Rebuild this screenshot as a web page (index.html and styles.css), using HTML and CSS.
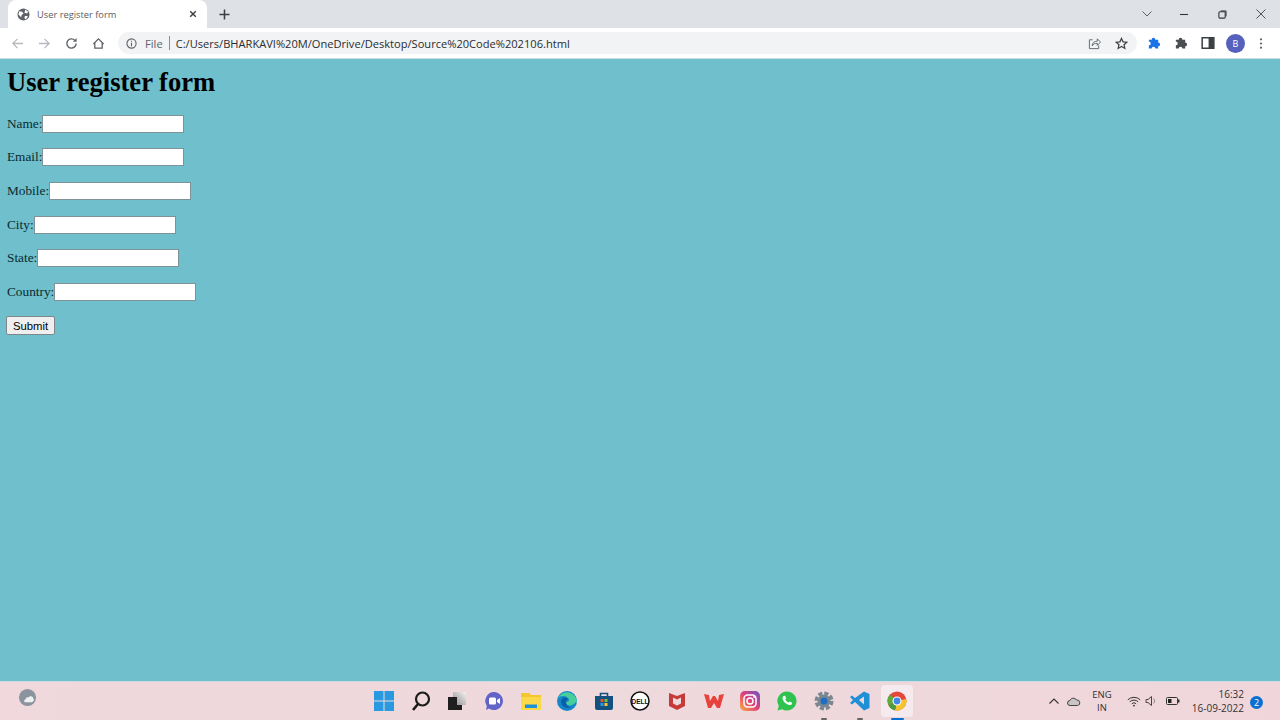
FILE: index.html
```html
<!DOCTYPE html>
<html lang="en">
  <head>
    <meta charset="utf-8" />
    <title>User register form</title>
    <link rel="stylesheet" href="styles.css">
  </head>
  <body>
    <header class="chrome">
      <div class="tabstrip">
        <div class="tab">
          <svg class="favicon" viewBox="0 0 14 14"><circle cx="7" cy="7" r="6.500" fill="#5f6368"/><path d="M2.500 3.500l3 .5 1.500 2-2 1.500-.5 2.500-3-3zM9 1.500l3 2.500-1 2-3-1zM8.500 8.500h3l-.5 2-2 2-1-2z" fill="#fff"/></svg>
          <span class="tab-title">User register form</span>
          <svg class="tab-close" viewBox="0 0 10 10"><path d="M1.500 1.500l7 7M8.500 1.500l-7 7" stroke="#3c4043" stroke-width="1.800"/></svg>
        </div>
        <svg class="new-tab" viewBox="0 0 12 12"><path d="M6 0.500v11M0.500 6h11" stroke="#3c4043" stroke-width="1.700"/></svg>
        <div class="window-controls">
          <svg class="win-icon chevron" viewBox="0 0 10 6"><path d="M0.500 0.500l4.500 4.500 4.500-4.500" fill="none" stroke="#5f6368" stroke-width="1"/></svg>
          <svg class="win-icon minimize" viewBox="0 0 10 10"><path d="M0 5h9" stroke="#333" stroke-width="1.200"/></svg>
          <svg class="win-icon restore" viewBox="0 0 10 10"><rect x="1" y="2" width="7" height="7" rx="1" fill="none" stroke="#333" stroke-width="1.200"/><path d="M3 1h6v6" fill="none" stroke="#333"/></svg>
          <svg class="win-icon close" viewBox="0 0 11 11"><path d="M0.500 0.500l10 10M10.500 0.500l-10 10" stroke="#444"/></svg>
        </div>
      </div>
      <div class="toolbar">
        <svg class="nav-icon" viewBox="0 0 14 14"><path d="M13 7H2M7 2L2 7l5 5" fill="none" stroke="#b6b9be" stroke-width="1.400"/></svg>
        <svg class="nav-icon" viewBox="0 0 14 14"><path d="M1 7h11M7 2l5 5-5 5" fill="none" stroke="#b6b9be" stroke-width="1.400"/></svg>
        <svg class="nav-icon" viewBox="0 0 14 14"><path d="M12 7a5 5 0 1 1-1.500-3.600" fill="none" stroke="#5f6368" stroke-width="1.500"/><path d="M12.500 1v4h-4z" fill="#5f6368"/></svg>
        <svg class="nav-icon" viewBox="0 0 14 14"><path d="M1.500 7.500L7 2l5.500 5.500M3 6.500V12h8V6.500" fill="none" stroke="#5f6368" stroke-width="1.400"/></svg>
        <div class="omnibox">
          <svg class="info-icon" viewBox="0 0 12 12"><circle cx="6" cy="6" r="5" fill="none" stroke="#5f6368" stroke-width="1.200"/><path d="M6 5.200V9M6 3v1.200" stroke="#5f6368" stroke-width="1.200"/></svg>
          <span class="scheme">File</span>
          <span class="divider"></span>
          <span class="url">C:/Users/BHARKAVI%20M/OneDrive/Desktop/Source%20Code%202106.html</span>
          <svg class="omni-icon share" viewBox="0 0 14 14"><path d="M5 3H1.500v9.500h10V9" fill="none" stroke="#5f6368"/><path d="M4.500 9.500c0-3.500 2.500-5 5.500-5V2l3.500 3.500L10 9V6.800c-2.500 0-4.500.7-5.500 2.700z" fill="none" stroke="#5f6368"/></svg>
          <svg class="omni-icon star" viewBox="0 0 14 14"><path d="M7 1.500l1.700 3.700 4 .4-3 2.700.9 4L7 10.300l-3.600 2 .9-4-3-2.700 4-.4z" fill="none" stroke="#3c4043" stroke-width="1.300"/></svg>
        </div>
        <svg class="ext-icon ext-blue" viewBox="0 0 15 15"><path d="M2 4h3a2 2 0 0 1 4 0h3v3a2 2 0 0 1 0 4v2.500H9a2 2 0 0 0-4 0H2V10a2 2 0 0 0 0-4z" fill="#1a73e8"/></svg>
        <svg class="ext-icon" viewBox="0 0 15 15"><path d="M2 4h3a2 2 0 0 1 4 0h3v3a2 2 0 0 1 0 4v2.500H9a2 2 0 0 0-4 0H2V10a2 2 0 0 0 0-4z" fill="#4a4d52"/></svg>
        <svg class="ext-icon" viewBox="0 0 12 12"><rect x="1" y="1.500" width="10" height="9" fill="none" stroke="#3c4043" stroke-width="1.300"/><rect x="6.500" y="1.500" width="4.500" height="9" fill="#3c4043"/></svg>
        <span class="avatar">B</span>
        <svg class="menu-dots" viewBox="0 0 4 14"><circle cx="2" cy="2.500" r="1.200" fill="#5f6368"/><circle cx="2" cy="7" r="1.200" fill="#5f6368"/><circle cx="2" cy="11.500" r="1.200" fill="#5f6368"/></svg>
      </div>
    </header>

    <main class="page">
      <h1>User register form</h1>
      <form>
        <p class="field"><label>Name:</label><input type="text" name="name" /></p>
        <p class="field"><label>Email:</label><input type="text" name="email" /></p>
        <p class="field"><label>Mobile:</label><input type="text" name="mobile" /></p>
        <p class="field"><label>City:</label><input type="text" name="city" /></p>
        <p class="field"><label>State:</label><input type="text" name="state" /></p>
        <p class="field"><label>Country:</label><input type="text" name="country" /></p>
        <p class="field"><button type="button" class="btn">Submit</button></p>
      </form>
    </main>

    <footer class="taskbar">
      <svg class="weather" viewBox="0 0 20 20"><circle cx="10" cy="10" r="9" fill="#8b949c"/><path d="M8 15c-2 0-2-3 0-3 0-2 2-3 3-2 1-2 5-2 5 1 2 1 0 4-2 4z" fill="#eef0f2"/></svg>
      <div class="task-icons">
        <span class="task-item"><svg viewBox="0 0 20 20"><path d="M0 0h9.500v9.500H0zM10.500 0H20v9.500h-9.500zM0 10.500h9.500V20H0zM10.500 10.500H20V20h-9.500z" fill="#2a9ae0"/></svg></span>
        <span class="task-item"><svg viewBox="0 0 20 20"><circle cx="11.500" cy="8" r="6.500" fill="none" stroke="#1b1b1b" stroke-width="2.200"/><path d="M7 13l-5 6" stroke="#1b1b1b" stroke-width="2.600"/></svg></span>
        <span class="task-item"><svg viewBox="0 0 20 20"><defs><linearGradient id="taskview" x1="0" y1="1" x2="1" y2="0"><stop offset="0" stop-color="#8d8a8c"/><stop offset="1" stop-color="#f5f2f4"/></linearGradient></defs><rect x="6" y="1" width="13" height="13" fill="url(#taskview)"/><rect x="1" y="6" width="9" height="13" fill="#1f1f1f"/><rect x="10" y="14" width="5" height="5" fill="#1f1f1f"/></svg></span>
        <span class="task-item"><svg viewBox="0 0 20 20"><path d="M10 1a9 9 0 1 1-5 16.500L2 19l.8-4A9 9 0 0 1 10 1z" fill="#6264c8"/><rect x="5" y="6.500" width="7" height="7" rx="1.500" fill="#fff"/><path d="M13 9l3-2v6l-3-2z" fill="#fff"/></svg></span>
        <span class="task-item"><svg viewBox="0 0 20 20"><path d="M0 2h8l2 2h10v15H0z" fill="#f7c52e"/><rect x="0" y="6" width="20" height="13" fill="#fbd84a"/><rect x="4" y="13.500" width="12" height="3.500" fill="#1f8fd6"/></svg></span>
        <span class="task-item"><svg viewBox="0 0 20 20"><circle cx="10" cy="10" r="10" fill="#1486c9"/><path d="M20 11a10 10 0 0 0-19-4c3-3 10-3 11 2 0 2-3 2-3 2 0 4 6 5 10 0z" fill="#47cf9b"/><path d="M9 11c0 3 2 5 5 5-3 2-9 1-10-5 0-2 1-3 2-4 2-1 5 0 6 2-1-1-3 0-3 2z" fill="#0b5fa8"/></svg></span>
        <span class="task-item"><svg viewBox="0 0 20 20"><path d="M1 5h18v12a2 2 0 0 1-2 2H3a2 2 0 0 1-2-2z" fill="#14517f"/><path d="M6.500 5V2.500h7V5" fill="none" stroke="#14517f" stroke-width="1.600"/><path d="M6.500 8h3v3h-3z" fill="#e5532d"/><path d="M10.500 8h3v3h-3z" fill="#7fba3a"/><path d="M6.500 12h3v3h-3z" fill="#2a9ae0"/><path d="M10.500 12h3v3h-3z" fill="#f7c52e"/></svg></span>
        <span class="task-item"><svg viewBox="0 0 20 20"><circle cx="10" cy="10" r="9" fill="#fff" stroke="#111" stroke-width="1.500"/><text x="10" y="12.500" class="dell-text">DELL</text></svg></span>
        <span class="task-item"><svg viewBox="0 0 20 20"><path d="M2 2l8 3 8-3v13l-8 4-8-4zM6 6.500v6l4 2 4-2v-6l-4 2z" fill="#c63a3a" fill-rule="evenodd"/></svg></span>
        <span class="task-item"><svg viewBox="0 0 20 20"><path d="M0 3l5 1 1 6 3-5h2l3 5 1-6 5-1-4 14h-3l-3-5-3 5H4z" fill="#e8423c"/></svg></span>
        <span class="task-item"><svg viewBox="0 0 20 20"><defs><linearGradient id="insta" x1="0" y1="1" x2="1" y2="0"><stop offset="0" stop-color="#f9b23c"/><stop offset="0.500" stop-color="#e0407a"/><stop offset="1" stop-color="#6a55c8"/></linearGradient></defs><rect width="20" height="20" rx="5" fill="url(#insta)"/><rect x="4" y="4" width="12" height="12" rx="3.500" fill="none" stroke="#fff" stroke-width="1.500"/><circle cx="10" cy="10" r="3" fill="none" stroke="#fff" stroke-width="1.500"/><circle cx="14" cy="6" r="0.900" fill="#fff"/></svg></span>
        <span class="task-item"><svg viewBox="0 0 20 20"><path d="M10 0.500a9.500 9.500 0 1 1-4.800 17.700L0.500 19.500l1.300-4.600A9.500 9.500 0 0 1 10 0.500z" fill="#2fc24f"/><path d="M6.500 5l1.500-.2 1.200 2.500-.9 1.200c.7 1.400 1.700 2.400 3.200 3l1.200-1 2.300 1.200-.2 1.500c-1 1-2.500 1.200-4.200.4-2.200-1-4-3-4.800-5-.5-1.400-.2-2.700.7-3.600z" fill="#fff"/></svg></span>
        <span class="task-item has-dot"><svg viewBox="0 0 20 20"><circle cx="10" cy="10" r="7.500" fill="none" stroke="#7b8790" stroke-width="4" stroke-dasharray="4 1.900"/><circle cx="10" cy="10" r="6.500" fill="#7b8790"/><circle cx="10" cy="10" r="3.500" fill="#1e6fc4"/></svg></span>
        <span class="task-item has-dot"><svg viewBox="0 0 20 20"><path d="M14 0.500l5.500 2.500v14L14 19.500 5 11l-3 2.500L0 12l3-3-3-3 2-1.500L5 7zM14 5.500L9 9l5 4.500z" fill="#1f8fd6" fill-rule="evenodd"/></svg></span>
        <span class="task-item active"><svg viewBox="0 0 20 20"><circle cx="10" cy="10" r="9.500" fill="#e5483a"/><path d="M10 10L1.800 14.700A9.500 9.500 0 0 1 3 3.600z" fill="#5cab3c"/><path d="M10 10l9.300-2A9.500 9.500 0 0 1 8 19.300z" fill="#f4c430"/><path d="M10 10L1.800 14.700A9.500 9.500 0 0 0 8 19.300z" fill="#4a9d40"/><circle cx="10" cy="10" r="4.500" fill="#fff"/><circle cx="10" cy="10" r="3.400" fill="#4587e8"/></svg></span>
      </div>
      <div class="tray">
        <svg class="tray-caret" viewBox="0 0 10 6"><path d="M0.500 5.500L5 1l4.500 4.500" fill="none" stroke="#333" stroke-width="1.100"/></svg>
        <svg class="tray-cloud" viewBox="0 0 14 9"><path d="M3 8.500a2.500 2.500 0 0 1 0-5C4 .5 8 .5 9.500 3a2.700 2.700 0 0 1 1 5.500z" fill="#c9c4c6" stroke="#444"/></svg>
        <span class="lang">ENG<br />IN</span>
        <svg class="tray-wifi" viewBox="0 0 14 11"><path d="M0.800 3.800a9 9 0 0 1 12.400 0M2.800 5.800a6 6 0 0 1 8.400 0M4.800 7.800a3 3 0 0 1 4.400 0" fill="none" stroke="#333"/><circle cx="7" cy="9.600" r="0.900" fill="#333"/></svg>
        <svg class="tray-sound" viewBox="0 0 12 12"><path d="M1 4.500h2L6.500 1.500v9L3 7.500H1z" fill="none" stroke="#444"/><path d="M8.500 3.500a3.500 3.500 0 0 1 0 5" fill="none" stroke="#888"/></svg>
        <svg class="tray-battery" viewBox="0 0 14 8"><rect x="0.500" y="0.500" width="11" height="7" rx="1" fill="none" stroke="#333"/><rect x="2" y="2" width="3.500" height="4" fill="#222"/><rect x="12" y="2.500" width="1.500" height="3" fill="#333"/></svg>
        <span class="clock">16:32<br />16-09-2022</span>
        <span class="badge">2</span>
      </div>
    </footer>
  </body>
</html>
```

FILE: styles.css
```css
html,
body {
  margin: 0;
  height: 100%;
}

body {
  width: 1280px;
  height: 720px;
  overflow: hidden;
  display: flex;
  flex-direction: column;
  background: #6fc0cc;
  font-family: "Liberation Serif", serif;
}

svg {
  display: block;
  flex: none;
}

/* browser frame */
.chrome {
  flex: none;
  font-family: "Open Sans", "Liberation Sans", sans-serif;
}

.tabstrip {
  height: 28px;
  display: flex;
  align-items: flex-end;
  background: #dee1e6;
}

.tab {
  width: 199px;
  height: 28px;
  margin-left: 8px;
  padding: 0 10px;
  box-sizing: border-box;
  display: flex;
  align-items: center;
  background: #fff;
  border-radius: 8px 8px 0 0;
}

.favicon {
  width: 13px;
  height: 13px;
  margin-left: -1px;
  margin-right: 7px;
}

.tab-title {
  flex: 1;
  font-size: 9.3px;
  color: #5a5d62;
}

.tab-close {
  width: 8px;
  height: 8px;
}

.new-tab {
  width: 11px;
  height: 11px;
  margin: 0 0 8px 12px;
}

.window-controls {
  margin-left: auto;
  height: 28px;
  display: flex;
  align-items: center;
}

.win-icon {
  width: 9px;
  height: 9px;
}

.chevron {
  width: 10px;
  height: 6px;
  margin-right: 28px;
}

.minimize {
  margin-right: 29px;
}

.restore {
  margin-right: 29px;
}

.close {
  width: 10px;
  height: 10px;
  margin-right: 14px;
}

.toolbar {
  height: 30px;
  padding-left: 11px;
  display: flex;
  align-items: center;
  background: #fff;
  border-bottom: 1px solid #c9dfe3;
}

.nav-icon {
  width: 13px;
  height: 13px;
  margin-right: 14px;
}

.omnibox {
  width: 1019px;
  height: 22px;
  margin-left: -1px;
  padding: 0 8px;
  box-sizing: border-box;
  display: flex;
  align-items: center;
  background: #f1f3f4;
  border-radius: 11px;
}

.info-icon {
  width: 11px;
  height: 11px;
}

.scheme {
  margin-left: 8px;
  font-size: 11.2px;
  color: #5f6368;
}

.divider {
  width: 1px;
  height: 14px;
  margin: 0 6px;
  background: #8a8d91;
}

.url {
  flex: 1;
  font-size: 11.1px;
  color: #2a2c2f;
}

.omni-icon {
  width: 13px;
  height: 13px;
}

.share {
  margin-right: 14px;
}

.star {
  margin-right: 1px;
}

.ext-icon {
  width: 14px;
  height: 14px;
  margin-left: 13px;
}

.ext-blue {
  margin-left: 10px;
}

.avatar {
  width: 19px;
  height: 19px;
  margin-left: 11px;
  display: flex;
  align-items: center;
  justify-content: center;
  border-radius: 50%;
  background: #5561bd;
  color: #fff;
  font-size: 9px;
}

.menu-dots {
  width: 4px;
  height: 13px;
  margin-left: 14px;
}

/* page content */
.page {
  flex: 1;
  padding: 0 7px;
  background: #6fc0cc;
  color: #000;
}

h1 {
  margin: 7px 0 16px;
  font-size: 26.6px;
  line-height: 32px;
  font-weight: bold;
}

.field {
  margin: 0 0 14.7px;
  height: 19px;
  display: flex;
  align-items: center;
  font-size: 13.3px;
  color: #0b2a30;
}

input[type="text"] {
  width: 142px;
  height: 18px;
  padding: 0;
  box-sizing: border-box;
  background: #fff;
  border: 1px solid #7f9298;
  border-radius: 0;
}

.btn {
  width: 49px;
  height: 19px;
  margin-left: -1px;
  padding: 0;
  background: #efefef;
  border: 1px solid #80878a;
  border-radius: 2px;
  font-family: "Liberation Sans", sans-serif;
  font-size: 11.3px;
  color: #000;
}

/* windows taskbar */
.taskbar {
  flex: none;
  height: 39px;
  position: relative;
  display: flex;
  align-items: center;
  background: linear-gradient(90deg, #f0d8dc, #eed9dd 50%, #f0d6da);
  border-top: 1px solid #cfdbe3;
  box-sizing: border-box;
  font-family: "Open Sans", "Liberation Sans", sans-serif;
}

.weather {
  width: 19px;
  height: 19px;
  margin: -8px 0 0 18px;
}

.task-icons {
  position: absolute;
  left: 368px;
  top: 0;
  height: 39px;
  display: flex;
  gap: 4.64px;
}

.task-item {
  width: 32px;
  height: 32px;
  margin-top: 3px;
  position: relative;
  display: flex;
  align-items: center;
  justify-content: center;
  border-radius: 4px;
}

.task-item svg {
  width: 20px;
  height: 20px;
}

.dell-text {
  font-family: "Liberation Sans", sans-serif;
  font-size: 6.5px;
  font-weight: bold;
  text-anchor: middle;
  fill: #111;
}

.has-dot::after,
.active::after {
  content: "";
  position: absolute;
  left: 13px;
  bottom: -3px;
  width: 6px;
  height: 2px;
  background: #666;
  border-radius: 1px;
}

.active {
  background: #f5ebee;
}

.active::after {
  left: 10px;
  width: 13px;
  background: #0a6fd0;
}

.tray {
  margin-left: auto;
  display: flex;
  align-items: center;
  color: #333;
  font-size: 10px;
}

.tray-caret {
  width: 10px;
  height: 6px;
}

.tray-cloud {
  width: 14px;
  height: 9px;
  margin-left: 8px;
}

.lang {
  width: 30px;
  margin-left: 6px;
  text-align: center;
  line-height: 13px;
  font-size: 9.5px;
}

.tray-wifi {
  width: 14px;
  height: 11px;
  margin-left: 10px;
}

.tray-sound {
  width: 12px;
  height: 12px;
  margin-left: 4px;
}

.tray-battery {
  width: 14px;
  height: 8px;
  margin-left: 9px;
}

.clock {
  width: 60px;
  margin-left: 4px;
  text-align: right;
  line-height: 14px;
  font-size: 10px;
}

.badge {
  width: 13px;
  height: 13px;
  margin: 2px 17px 0 6px;
  display: flex;
  align-items: center;
  justify-content: center;
  border-radius: 50%;
  background: #0a6fd0;
  color: #fff;
  font-size: 9px;
}
```
